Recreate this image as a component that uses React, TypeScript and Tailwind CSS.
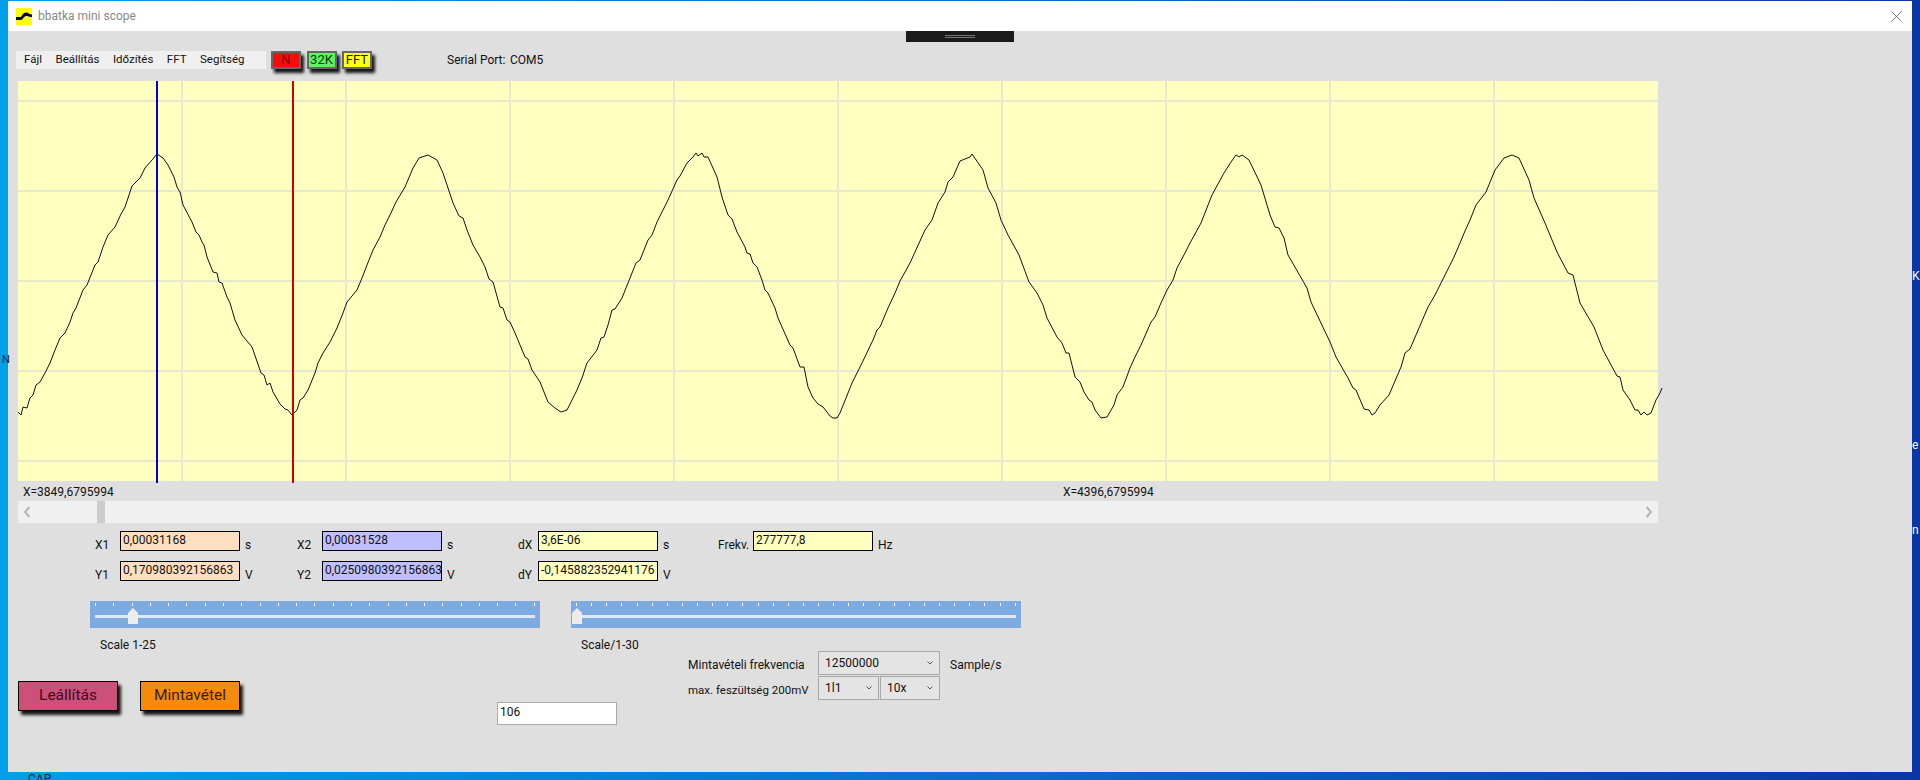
const WAVE: [number, number][] = [
  [18,412],[21,415],[23,407],[27,408],[30,398],[33,395],[36,385],[40,382],[45,373],[50,363],[55,350],[60,338],[65,333],[70,322],[73,313],[76,308],[83,290],[87,285],[95,265],[98,262],[103,247],[108,235],[115,227],[121,214],[125,207],[130,192],[132,186],[140,178],[145,168],[152,160],[157,154],[163,158],[168,165],[174,177],[177,187],[180,192],[183,205],[192,222],[196,232],[199,235],[202,242],[204,245],[207,257],[213,272],[217,273],[219,282],[222,283],[227,297],[230,303],[235,320],[242,335],[252,347],[261,373],[264,375],[267,385],[270,383],[273,392],[280,404],[285,409],[288,410],[292,415],[297,410],[300,400],[303,398],[308,390],[315,373],[318,363],[323,353],[330,342],[337,328],[343,313],[347,302],[357,290],[362,278],[367,265],[373,250],[380,237],[385,225],[390,215],[396,202],[405,187],[413,168],[419,158],[428,155],[437,160],[443,173],[448,188],[453,203],[459,216],[463,218],[467,230],[473,245],[480,257],
  [485,267],[489,279],[493,282],[500,307],[503,308],[507,320],[510,322],[515,333],[525,357],[528,359],[532,370],[540,382],[548,402],[555,408],[561,412],[567,410],[577,390],[582,378],[587,363],[597,350],[601,338],[604,337],[608,325],[612,310],[615,309],[622,298],[630,278],[636,263],[640,260],[648,240],[652,235],[657,222],[662,212],[668,200],[677,180],[680,176],[687,163],[693,157],[696,153],[698,156],[702,153],[704,157],[708,157],[717,177],[722,197],[728,215],[732,219],[737,232],[745,247],[747,253],[750,254],[753,263],[757,267],[762,280],[765,290],[768,293],[775,308],[778,318],[790,345],[793,348],[800,367],[804,367],[808,387],[813,398],[818,404],[823,407],[827,412],[830,416],[833,418],[837,418],[840,413],[846,398],[852,383],[862,363],[873,340],[877,330],[880,327],[888,308],[895,293],[900,281],[910,263],[925,230],[932,220],[938,203],[945,192],[948,182],[953,177],[960,161],
  [970,157],[972,154],[983,170],[988,188],[996,203],[1001,220],[1008,235],[1019,255],[1029,282],[1037,293],[1043,305],[1047,318],[1057,337],[1062,343],[1066,353],[1069,353],[1075,377],[1080,382],[1084,392],[1089,400],[1092,402],[1095,410],[1101,418],[1107,417],[1114,405],[1117,395],[1123,387],[1130,368],[1135,357],[1141,345],[1151,322],[1155,317],[1161,303],[1167,290],[1173,280],[1177,268],[1185,253],[1190,243],[1201,223],[1212,195],[1224,173],[1231,162],[1236,155],[1239,157],[1242,155],[1249,160],[1261,185],[1270,215],[1275,227],[1279,228],[1284,238],[1288,255],[1307,288],[1311,302],[1330,342],[1336,357],[1348,378],[1353,388],[1356,390],[1364,409],[1369,410],[1372,415],[1375,413],[1380,405],[1389,395],[1401,367],[1405,353],[1410,349],[1428,307],[1435,295],[1454,257],[1460,243],[1465,231],[1470,220],[1476,205],[1486,192],[1495,170],[1504,158],[1512,155],[1519,158],[1529,180],[1534,198],[1545,223],[1557,252],[1568,273],[1573,275],[1580,303],[1594,327],[1603,350],[1617,376],[1620,377],[1623,390],[1630,400],[1635,410],[1638,410],[1641,415],[1644,412],[1647,415],[1651,413],[1656,400],[1660,393],[1662,388],
];

const H_LINES = [101, 191, 281, 371, 461];
const V_LINES = [182, 346, 510, 674, 838, 1002, 1166, 1330, 1494];

function Plot() {
  return (
    <svg width="1640" height="401" viewBox="18 81 1640 401" className="block overflow-visible">
      <rect x="18" y="81" width="1640" height="400" fill="#ffffc0" />
      {H_LINES.map((y) => (
        <line key={y} x1="18" x2="1658" y1={y} y2={y} stroke="#e8e8cc" strokeWidth="2" />
      ))}
      {V_LINES.map((x) => (
        <line key={x} x1={x} x2={x} y1="81" y2="481" stroke="#e8e8cc" strokeWidth="2" />
      ))}
      <polyline
        points={WAVE.map((p) => p.join(",")).join(" ")}
        fill="none"
        stroke="#111"
        strokeWidth="1"
        strokeLinejoin="round"
      />
      <line x1="157" x2="157" y1="81" y2="483" stroke="#0000c8" strokeWidth="2" />
      <line x1="293" x2="293" y1="81" y2="483" stroke="#d00000" strokeWidth="2" />
    </svg>
  );
}

function ToolButton({ label, className }: { label: string; className: string }) {
  return (
    <div
      className={`flex h-[18px] w-[30px] items-center justify-center border-2 border-[#666] text-[13px] shadow-[3px_4px_3px_rgba(0,0,0,0.9)] ${className}`}
    >
      {label}
    </div>
  );
}

function Field(props: { label: string; value: string; unit: string; labelWidth: string; bg: string }) {
  return (
    <div className="flex items-start">
      <div className={`pt-[6px] leading-4 ${props.labelWidth}`}>{props.label}</div>
      <div className={`h-5 w-[120px] border border-black pl-[2px] leading-[17px] whitespace-nowrap ${props.bg}`}>
        {props.value}
      </div>
      <div className="pt-[6px] pl-[5px] leading-4">{props.unit}</div>
    </div>
  );
}

function Slider({ ticks, thumb }: { ticks: number; thumb: string }) {
  return (
    <div className="relative h-[27px] w-[450px] bg-[#7eaae2]">
      <div className="flex justify-between px-[5px] pt-[2px]">
        {Array.from({ length: ticks }, (_, i) => (
          <div key={i} className="h-[3px] w-px bg-white" />
        ))}
      </div>
      <div className="mx-[5px] mt-[9px] h-[3px] bg-[#dfe9f5]" />
      <svg width="10" height="16" viewBox="0 0 10 16" className={`absolute top-[7px] ${thumb}`}>
        <path d="M5 0 L10 5 V16 H0 V5 Z" fill="#ececec" />
      </svg>
    </div>
  );
}

function Chevron({ d }: { d: string }) {
  return (
    <svg width="8" height="12" viewBox="0 0 8 12" className="block">
      <path d={d} fill="none" stroke="#b4b4b4" strokeWidth="2" />
    </svg>
  );
}

function Select({ value, className }: { value: string; className: string }) {
  return (
    <div className={`flex h-6 items-center justify-between border border-[#a8a8a8] bg-[#e4e4e4] px-[6px] ${className}`}>
      <span className="-mt-[1px]">{value}</span>
      <svg width="6" height="4" viewBox="0 0 6 4" className="block">
        <path d="M0.5 0.5 L3 3 L5.5 0.5" fill="none" stroke="#555" strokeWidth="1" />
      </svg>
    </div>
  );
}

export default function App() {
  return (
    <div className="relative flex h-[780px] w-[1920px] overflow-hidden bg-gradient-to-r from-[#00a0ea] via-[#0a6fce] to-[#0a35a6] font-['Roboto',sans-serif] text-[12px] text-[#111]">
      <div className="w-2 shrink-0" />
      <div className="mt-px flex h-[771px] w-[1904px] flex-col bg-[#dfdfdf]">
        {/* title bar */}
        <div className="flex h-[30px] shrink-0 items-center bg-white pr-[10px] pl-2">
          <svg width="16" height="17" viewBox="0 0 16 17" className="block">
            <rect width="16" height="17" fill="#ffff00" />
            <path d="M0 9 H4.5 C6 9 6.5 4.5 10 4.5 C12.5 4.5 13 6.5 16 6.5 V9 C12.5 9 12 8 10 8 C8 8 7 12 4.5 12 H0 Z" fill="#000060" />
          </svg>
          <span className="ml-[6px] text-[#888]">bbatka mini scope</span>
          <svg width="11" height="11" viewBox="0 0 11 11" className="ml-auto block">
            <path d="M0.5 0.5 L10.5 10.5 M10.5 0.5 L0.5 10.5" stroke="#555" strokeWidth="0.8" />
          </svg>
        </div>

        {/* collapse handle */}
        <div className="absolute top-[31px] left-[906px] flex h-[11px] w-[108px] flex-col items-center justify-center gap-[1.5px] bg-[#1a1a1a]">
          <div className="h-px w-[30px] bg-[#777]" />
          <div className="h-px w-[30px] bg-[#777]" />
        </div>

        {/* menu + quick buttons */}
        <div className="mt-5 ml-2 flex h-[18px] items-center">
          <div className="flex h-[18px] w-[250px] items-center gap-[13.5px] bg-[#f0f0f0] pl-2 text-[11.5px]">
            <span>Fájl</span>
            <span>Beállítás</span>
            <span>Időzítés</span>
            <span>FFT</span>
            <span>Segítség</span>
          </div>
          <div className="ml-[5px] flex gap-[5.5px]">
            <ToolButton label="N" className="bg-[#f40d0d] text-[#7a0000]" />
            <ToolButton label="32K" className="bg-[#5cf55c] text-[#063806]" />
            <ToolButton label="FFT" className="bg-[#ffff1a] text-[#222]" />
          </div>
          <span className="ml-[75px] w-[63px]">Serial Port:</span>
          <span>COM5</span>
        </div>

        <div className="mt-3 ml-[10px]">
          <Plot />
        </div>

        <div className="ml-[15px] flex h-[19px] items-center">
          <div className="w-[89px] whitespace-nowrap">X=3849,6795994</div>
          <div className="ml-[951px] w-[89px] whitespace-nowrap">X=4396,6795994</div>
        </div>

        {/* horizontal scrollbar */}
        <div className="ml-[10px] flex h-[22px] w-[1640px] items-center bg-[#f0f0f0]">
          <div className="w-[79px] pl-[5px]">
            <Chevron d="M6.5 1 L2 6 L6.5 11" />
          </div>
          <div className="h-full w-2 bg-[#cdcdcd]" />
          <div className="ml-auto pr-[5px]">
            <Chevron d="M1.5 1 L6 6 L1.5 11" />
          </div>
        </div>

        {/* cursor readouts */}
        <div className="mt-2 ml-[87px] grid grid-cols-[202px_221px_200px_auto] gap-y-2">
          <Field label="X1" value="0,00031168" unit="s" labelWidth="w-[25px]" bg="bg-[#ffdfc0]" />
          <Field label="X2" value="0,00031528" unit="s" labelWidth="w-[25px]" bg="bg-[#bfbfff]" />
          <Field label="dX" value="3,6E-06" unit="s" labelWidth="w-5" bg="bg-[#ffffc0]" />
          <Field label="Frekv." value="277777,8" unit="Hz" labelWidth="w-[35px]" bg="bg-[#ffffc0]" />
          <Field label="Y1" value="0,170980392156863" unit="V" labelWidth="w-[25px]" bg="bg-[#ffdfc0]" />
          <Field label="Y2" value="0,0250980392156863" unit="V" labelWidth="w-[25px]" bg="bg-[#bfbfff]" />
          <Field label="dY" value="-0,145882352941176" unit="V" labelWidth="w-5" bg="bg-[#ffffc0]" />
        </div>

        <div className="mt-[18px] ml-[82px] flex gap-[31px]">
          <Slider ticks={25} thumb="left-[38px]" />
          <Slider ticks={30} thumb="left-[0.5px]" />
        </div>

        <div className="mt-[9px] ml-[10px] flex">
          <div className="w-[479px] shrink-0">
            <div className="ml-[82px] leading-4">Scale 1-25</div>
            <div className="mt-7 flex gap-[22px] text-[15.5px]">
              <div className="flex h-[30px] w-[100px] items-center justify-center border border-black bg-[#cc5078] text-[#3c0c1e] shadow-[3px_4px_3px_rgba(0,0,0,0.9)]">
                Leállítás
              </div>
              <div className="flex h-[30px] w-[100px] items-center justify-center border border-black bg-[#f58a0c] text-[#3c1c00] shadow-[3px_4px_3px_rgba(0,0,0,0.9)]">
                Mintavétel
              </div>
            </div>
          </div>
          <div className="w-[191px] shrink-0">
            <div className="ml-[84px] leading-4">Scale/1-30</div>
            <div className="mt-[49px] h-[23px] w-[120px] border border-[#aaa] bg-white pl-[2px] leading-[19px]">106</div>
          </div>
          <div className="mt-[14px] grid grid-cols-[130px_122px_auto] content-start gap-y-px">
            <div className="pt-[6px] leading-4">Mintavételi frekvencia</div>
            <Select value="12500000" className="w-[122px]" />
            <div className="pt-[6px] pl-[10px] leading-4">Sample/s</div>
            <div className="pt-[6px] text-[11.5px] leading-4 whitespace-nowrap">max. feszültség 200mV</div>
            <div className="flex gap-px">
              <Select value="1l1" className="w-[61px]" />
              <Select value="10x" className="w-[60px]" />
            </div>
          </div>
        </div>
      </div>

      {/* bits of desktop icon labels showing around the window */}
      <div className="absolute top-[772px] left-[28px] leading-[14px] text-[#0b1a33]">CAP</div>
      <div className="absolute top-[352px] left-[2px] text-[11px] leading-4 text-[#0b1a33]">N</div>
      <div className="absolute top-[268px] left-[1912px] leading-4 text-white">K</div>
      <div className="absolute top-[437px] left-[1912px] leading-4 text-white">e</div>
      <div className="absolute top-[522px] left-[1912px] leading-4 text-white">n</div>
    </div>
  );
}
